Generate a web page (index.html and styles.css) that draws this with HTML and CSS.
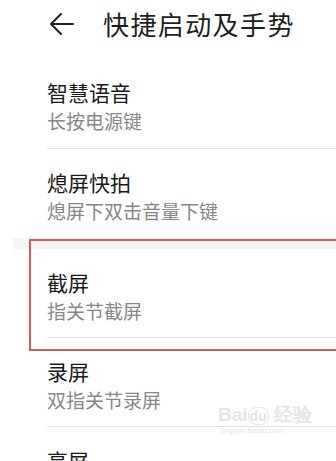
FILE: index.html
```html
<!DOCTYPE html>
<html lang="zh">
<head>
<meta charset="utf-8">
<link rel="stylesheet" href="styles.css">
</head>
<body>
<div class="page">
  <header class="header">
    <svg class="back" width="24" height="22" viewBox="0 0 24 22">
      <path d="M23 11H1.5M11 1L1 11l10 10" fill="none" stroke="#222" stroke-width="2" stroke-linecap="round" stroke-linejoin="round"/>
    </svg>
    <h1 class="title">快捷启动及手势</h1>
  </header>
  <div class="item first">
    <div class="item-title">智慧语音</div>
    <div class="item-sub">长按电源键</div>
  </div>
  <div class="item no-line">
    <div class="item-title">熄屏快拍</div>
    <div class="item-sub">熄屏下双击音量下键</div>
  </div>
  <div class="band"></div>
  <div class="item">
    <div class="item-title">截屏</div>
    <div class="item-sub">指关节截屏</div>
  </div>
  <div class="item">
    <div class="item-title">录屏</div>
    <div class="item-sub">双指关节录屏</div>
  </div>
  <div class="item">
    <div class="item-title">亮屏</div>
  </div>
  <div class="highlight"></div>
  <div class="watermark">
    <div class="wm-logo">Bai<span class="wm-du">du</span> 经验</div>
    <div class="wm-url">jingyan.baidu.com</div>
  </div>
</div>
</body>
</html>
```

FILE: styles.css
```css
html, body {
  margin: 0;
  padding: 0;
  background: #fff;
  overflow: hidden;
}
body {
  font-family: "Noto Sans CJK SC", "Noto Sans", sans-serif;
  width: 336px;
  height: 461px;
}
.page {
  position: relative;
  width: 336px;
  height: 461px;
  overflow: hidden;
}
.header {
  display: flex;
  align-items: center;
  height: 48px;
  padding-left: 50px;
}
.back {
  display: block;
  flex: none;
}
.title {
  margin: 0 0 0 29px;
  font-size: 26px;
  font-weight: 400;
  color: #1e1e1e;
  line-height: 1;
  letter-spacing: 1.4px;
}
.item {
  margin-left: 47px;
  height: 89px;
  border-bottom: 1px solid #e3e3e3;
  box-sizing: border-box;
  padding-top: 18px;
}
.item.first {
  margin-top: 11px;
  height: 90px;
}
.item.no-line {
  border-bottom: none;
}
.item-title {
  font-size: 21px;
  line-height: 30px;
  color: #1a1a1a;
}
.item-sub {
  font-size: 19px;
  line-height: 28px;
  color: #878787;
}
.band {
  margin-left: 13px;
  height: 11px;
  background: #f4f4f4;
}
.highlight {
  position: absolute;
  left: 29px;
  top: 239px;
  width: 320px;
  height: 112px;
  box-sizing: border-box;
  border: 2px solid #dc5a55;
}
.watermark {
  position: absolute;
  left: 218px;
  top: 405px;
  color: #e6e6e6;
  font-family: "Liberation Sans", sans-serif;
}
.wm-logo {
  font-size: 19px;
  font-weight: 700;
  line-height: 20px;
}
.wm-du {
  border: 1px solid #e6e6e6;
  border-radius: 8px;
  font-size: 14px;
  padding: 0 1px;
}
.wm-url {
  font-size: 8px;
  line-height: 10px;
  margin-left: 2px;
}
```
